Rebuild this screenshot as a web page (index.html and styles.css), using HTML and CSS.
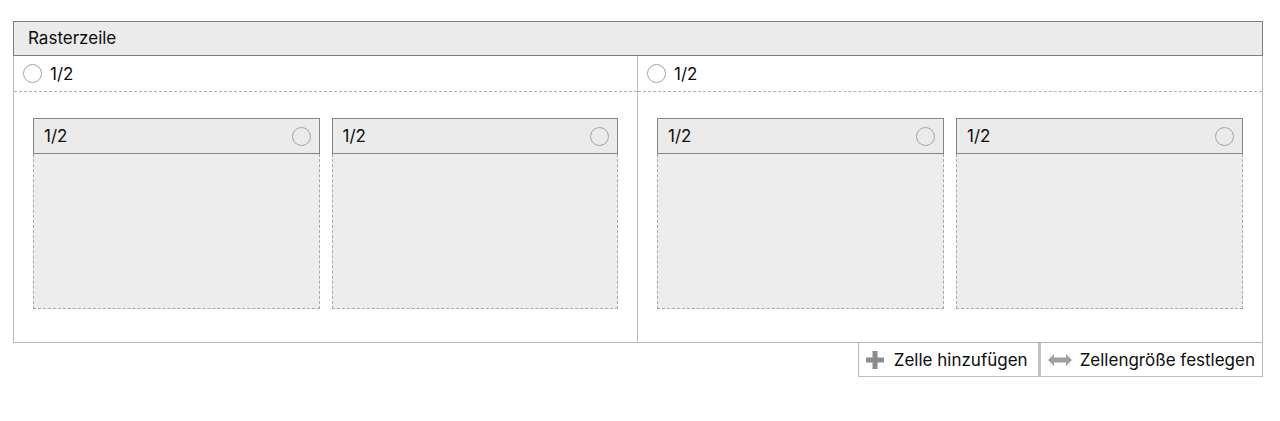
FILE: index.html
```html
<!DOCTYPE html>
<html lang="de">
<head>
  <meta charset="UTF-8">
  <title>Rasterzeile</title>
  <link rel="stylesheet" href="styles.css">
</head>
<body>

  <div class="grid-row">
    <div class="row-header">Rasterzeile</div>
    <div class="row-columns">
      <div class="column">
        <div class="column-head">
          <span class="radio"></span>
          <span>1/2</span>
        </div>
        <div class="column-cells">
          <div class="cell">
            <div class="cell-head">1/2 <span class="radio"></span></div>
            <div class="cell-body"></div>
          </div>
          <div class="cell">
            <div class="cell-head">1/2 <span class="radio"></span></div>
            <div class="cell-body"></div>
          </div>
        </div>
      </div>
      <div class="column">
        <div class="column-head">
          <span class="radio"></span>
          <span>1/2</span>
        </div>
        <div class="column-cells">
          <div class="cell">
            <div class="cell-head">1/2 <span class="radio"></span></div>
            <div class="cell-body"></div>
          </div>
          <div class="cell">
            <div class="cell-head">1/2 <span class="radio"></span></div>
            <div class="cell-body"></div>
          </div>
        </div>
      </div>
    </div>
    <div class="row-actions">
      <button class="action">
        <svg width="18" height="18" viewBox="0 0 18 18">
          <path d="M6.5 0h5v6.5H18v5h-6.5V18h-5v-6.5H0v-5h6.5z" fill="#8c8c8c"/>
        </svg>
        Zelle hinzufügen
      </button>
      <button class="action">
        <svg width="24" height="12" viewBox="0 0 24 12">
          <path d="M0 6l6-6v3.5h12V0l6 6-6 6V8.5H6V12z" fill="#a0a0a0"/>
        </svg>
        Zellengröße festlegen
      </button>
    </div>
  </div>

</body>
</html>
```

FILE: styles.css
```css
body {
  margin: 0;
  padding: 21px 17px 0 13px;
  font-family: Inter, "Liberation Sans", sans-serif;
  color: #0d0d0d;
  background: #fff;
}
.row-header {
  height: 33px;
  line-height: 33px;
  padding: 0 14px;
  background-color: #ebebeb;
  border: 1px solid #7d7d7d;
  font-size: 17px;
}
.row-columns {
  display: flex;
  border: 1px solid #b8b8b8;
  border-top: none;
}
.column {
  flex: 1;
}
.column:first-child {
  flex: none;
  width: 623px;
  border-right: 1px solid #b8b8b8;
}
.column-head {
  display: flex;
  align-items: center;
  gap: 8px;
  height: 35px;
  padding: 0 9px;
  border-bottom: 1px dashed #b0b0b0;
  font-size: 17px;
}
.column-cells {
  display: flex;
  gap: 12px;
  padding: 26px 19px 33px 19px;
}
.cell {
  flex: 1;
}
.cell-head {
  display: flex;
  justify-content: space-between;
  align-items: center;
  height: 34px;
  padding: 0 8px 0 10px;
  background-color: #ebebeb;
  border: 1px solid #858585;
  font-size: 17px;
}
.cell-body {
  height: 154px;
  background-color: #ededed;
  border: 1px dashed #a8a8a8;
  border-top: none;
}
.radio {
  display: inline-block;
  width: 17px;
  height: 17px;
  border: 1px solid #a3a3a3;
  border-radius: 50%;
  background-color: #fff;
}
.cell-head .radio {
  background-color: #ebebeb;
}
.row-actions {
  display: flex;
  justify-content: flex-end;
}
.action {
  display: flex;
  align-items: center;
  gap: 10px;
  height: 34px;
  padding: 0 10px 0 7px;
  background: #fff;
  border: 1px solid #bdbdbd;
  border-top: none;
  font-family: inherit;
  font-size: 17px;
  color: #0d0d0d;
}
.action + .action {
  border-left: 2px solid #c4c4c4;
  gap: 8px;
  padding-right: 7px;
}
```
